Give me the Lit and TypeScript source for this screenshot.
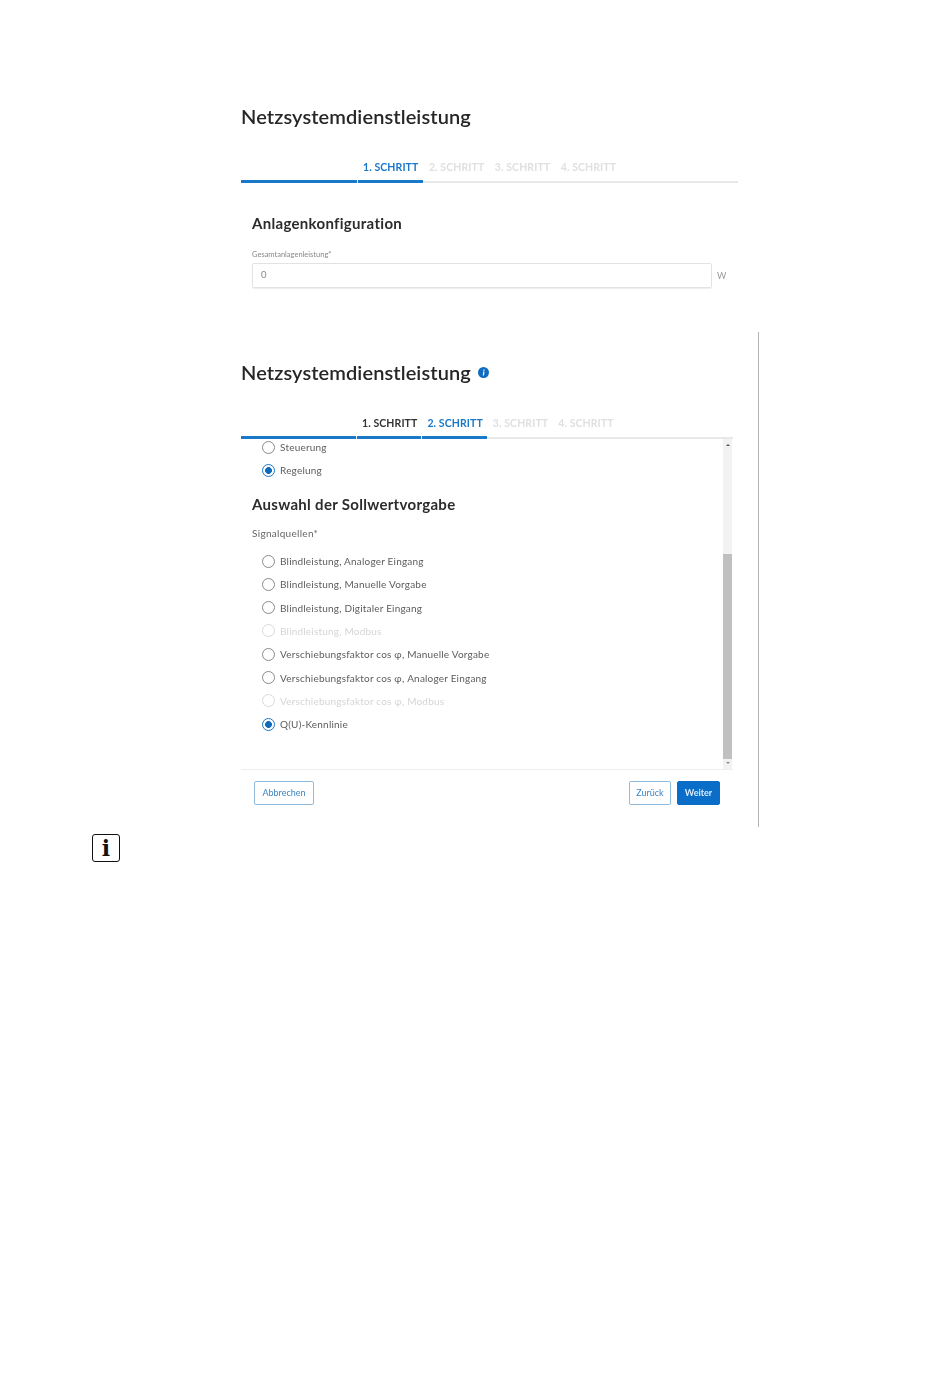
import { LitElement, html, css, svg } from "lit";
import { customElement } from "lit/decorators.js";

const sources: { t: string; off?: boolean; on?: boolean }[] = [
  { t: "Blindleistung, Analoger Eingang" },
  { t: "Blindleistung, Manuelle Vorgabe" },
  { t: "Blindleistung, Digitaler Eingang" },
  { t: "Blindleistung, Modbus", off: true },
  { t: "Verschiebungsfaktor cos φ, Manuelle Vorgabe" },
  { t: "Verschiebungsfaktor cos φ, Analoger Eingang" },
  { t: "Verschiebungsfaktor cos φ, Modbus", off: true },
  { t: "Q(U)-Kennlinie", on: true },
];

@customElement("app-root")
export class AppRoot extends LitElement {
  static styles = css`
    :host {
      display: block;
      width: 950px;
      height: 1378px;
      background: #fff;
      font-family: Lato, "Open Sans", sans-serif;
      color: #555;
      overflow: hidden;
    }
    .page { padding: 104px 0 0 241px; filter: blur(0.35px); }
    .title {
      margin: 0;
      font-size: 20px;
      line-height: 24px;
      font-weight: 600;
      color: #262626;
      letter-spacing: 0.1px;
      display: flex;
      align-items: center;
      gap: 7px;
    }
    .info { width: 11px; height: 11px; display: block; }
    .first { width: 497px; }
    .tabs { display: flex; position: relative; height: 27px; margin-top: 32px; }
    .tabs.two { width: 492px; }
    .labels {
      display: flex;
      gap: 10.5px;
      padding-left: 122px;
      font-size: 10.5px;
      font-weight: 700;
      line-height: 14px;
      letter-spacing: 0.1px;
      color: #e0e0e0;
      white-space: nowrap;
    }
    .two .labels { padding-left: 121px; gap: 10px; }
    .labels .done { color: #333; }
    .labels .cur { color: #1a78c8; }
    .rail {
      position: absolute; left: 0; right: 0; bottom: 4px; height: 2px;
      background: #e8e8e8; display: flex; gap: 1px;
    }
    .rail i { display: block; height: 3px; margin-top: -1px; background: #1a78c8; }
    .h2 {
      margin: 0;
      font-size: 15px;
      line-height: 20px;
      font-weight: 700;
      color: #2c2c2c;
      letter-spacing: 0.3px;
    }
    .cfg { padding: 26px 0 0 11px; }
    .cfg .lbl {
      margin-top: 17px;
      font-size: 7.5px;
      line-height: 10px;
      color: #888;
    }
    .field { display: flex; align-items: center; margin-top: 3px; }
    .input {
      width: 460px;
      height: 25px;
      box-sizing: border-box;
      border: 1px solid #e2e2e2;
      border-radius: 2px;
      padding-left: 8px;
      font-size: 9.5px;
      line-height: 22px;
      color: #888;
      box-shadow: 0 1px 1px #eee;
    }
    .unit { margin-left: 5px; font-size: 9px; color: #999; }
    .second {
      width: 518px;
      height: 495px;
      box-sizing: border-box;
      border-right: 1px solid #b4b4b4;
      margin-top: 44px;
      padding-top: 28px;
    }
    .body { width: 492px; height: 331px; box-sizing: border-box; display: flex; border-bottom: 1px solid #eee; margin-top: -4px; }
    .scroll { flex: 1; padding: 0 0 0 11px; overflow: hidden; }
    .inner { margin-top: -3.5px; }
    .bar {
      width: 9px; margin-right: 1px; background: #f2f2f2; display: flex; flex-direction: column; align-items: center;
    }
    .arrow { width: 0; height: 0; border-left: 2px solid transparent; border-right: 2px solid transparent; }
    .arrow.up { border-bottom: 2px solid #555; margin-top: 5px; }
    .arrow.down { border-top: 2px solid #888; margin-top: 3px; }
    .thumb { width: 9px; height: 205px; background: #c0c0c0; margin-top: 108px; }
    .radio {
      display: flex; align-items: center; height: 23.3px; padding-left: 10px; gap: 5px;
      font-size: 10px; letter-spacing: 0.2px; color: #5c5c5c; white-space: nowrap;
    }
    .radio.off { color: #d5d5d5; }
    .dot { width: 13px; height: 13px; border-radius: 50%; border: 1.3px solid #888; box-sizing: border-box; flex: none; }
    .radio.off .dot { border-color: #d8d8d8; }
    .radio.on .dot {
      border: 1.6px solid #1a78c8;
      background: radial-gradient(circle, #0f6cbd 0 3.1px, #fff 3.7px);
    }
    .scroll .h2 { margin-top: 12px; }
    .sig { margin-top: 11.5px; font-size: 10px; line-height: 14px; color: #666; letter-spacing: 0.3px; }
    .list { margin-top: 9.85px; }
    .actions { width: 492px; box-sizing: border-box; display: flex; gap: 6px; padding: 11px 13px 0 13px; }
    .btn {
      height: 24px; box-sizing: border-box; border: 1px solid #8fbcdf; border-radius: 2px; background: #fff;
      font-family: inherit; font-size: 9px; color: #3b84c4; padding: 0 0 1px; text-align: center;
    }
    .b1 { width: 60px; margin-right: auto; }
    .b2 { width: 42px; }
    .b3 { width: 43px; background: #0a6ec8; border-color: #0a6ec8; color: #d9ecfb; font-weight: 700; }
    .note {
      width: 28px; height: 28px; box-sizing: border-box; margin: 7px 0 0 92px;
      border: 1.5px solid #111; border-radius: 3px;
      display: flex; align-items: center; justify-content: center;
      font-family: "DejaVu Serif", serif; font-size: 22px; font-weight: 700; color: #111; line-height: 1;
    }
  `;

  private rail(widths: number[]) {
    return html`<div class="rail">${widths.map((w) => html`<i style="width:${w}px"></i>`)}</div>`;
  }

  private radio(t: string, off = false, on = false) {
    return html`<div class="radio ${off ? "off" : ""} ${on ? "on" : ""}"><span class="dot"></span>${t}</div>`;
  }

  render() {
    return html`
      <div class="page">
        <div class="first">
          <h1 class="title">Netzsystemdienstleistung</h1>
          <div class="tabs">
            <div class="labels"><span class="cur">1. SCHRITT</span><span>2. SCHRITT</span><span>3. SCHRITT</span><span>4. SCHRITT</span></div>
            ${this.rail([116, 65])}
          </div>
          <div class="cfg">
            <h2 class="h2">Anlagenkonfiguration</h2>
            <div class="lbl">Gesamtanlagenleistung*</div>
            <div class="field"><div class="input">0</div><span class="unit">W</span></div>
          </div>
        </div>
        <div class="second">
          <h1 class="title">Netzsystemdienstleistung
            <svg class="info" viewBox="0 0 11 11">
              ${svg`<circle cx="5.5" cy="5.5" r="5.5" fill="#0f6cc0"/><path d="M5.2 4.6h1.3L6 8.4H4.8z M5.4 2.4h1.3l-.2 1.3H5.2z" fill="#fff"/>`}
            </svg>
          </h1>
          <div class="tabs two">
            <div class="labels"><span class="done">1. SCHRITT</span><span class="cur">2. SCHRITT</span><span>3. SCHRITT</span><span>4. SCHRITT</span></div>
            ${this.rail([115, 64, 65])}
          </div>
          <div class="body">
            <div class="scroll"><div class="inner">
              ${this.radio("Steuerung")}
              ${this.radio("Regelung", false, true)}
              <h2 class="h2">Auswahl der Sollwertvorgabe</h2>
              <div class="sig">Signalquellen*</div>
              <div class="list">${sources.map((s) => this.radio(s.t, s.off, s.on))}</div>
            </div></div>
            <div class="bar"><span class="arrow up"></span><div class="thumb"></div><span class="arrow down"></span></div>
          </div>
          <div class="actions">
            <button class="btn b1">Abbrechen</button>
            <button class="btn b2">Zurück</button>
            <button class="btn b3">Weiter</button>
          </div>
        </div>
      </div>
      <div class="note">i</div>
    `;
  }
}
